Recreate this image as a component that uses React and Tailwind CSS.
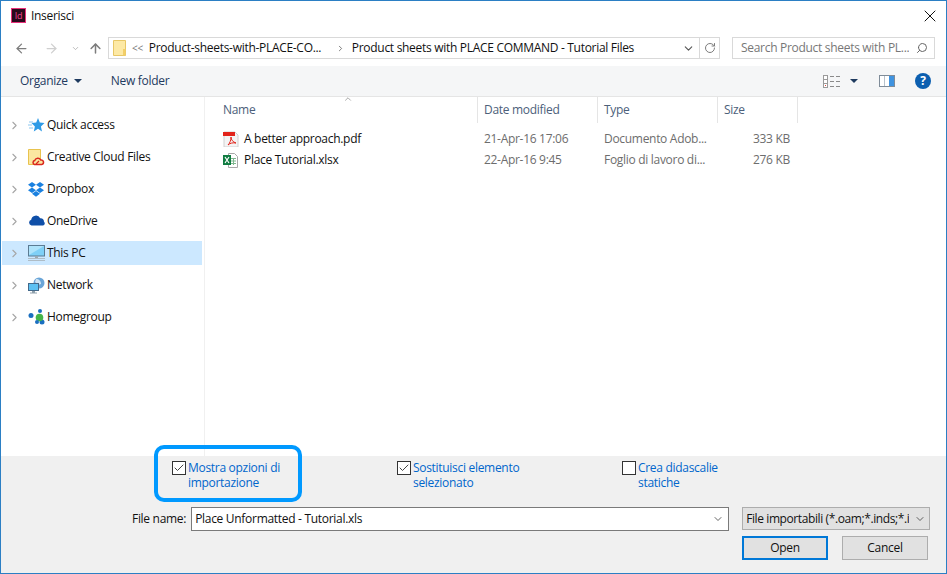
import { ChevronRight, ChevronDown, ArrowLeft, ArrowRight, ArrowUp, RotateCw, Search, X, Check } from "lucide-react"

const font = "font-['Open_Sans','Noto_Sans',sans-serif]"

const StarIcon = () => (
  <svg width="18" height="16" viewBox="0 0 18 16">
    <path d="M11 1l1.800 4.600 4.700.5-3.600 3.300 1.100 5L11 11.700l-4.200 2.700 1.100-5L4.500 6.100l4.700-.5z" fill="#2e9be6" />
    <path d="M2 5h4M1 8h4M2 11h4" stroke="#8cc7ef" strokeWidth="1" />
  </svg>
)

const CloudFolderIcon = () => (
  <svg width="18" height="17" viewBox="0 0 18 17">
    <path d="M1.500.5h12v15h-12z" fill="#fbe7a1" stroke="#e8c34e" />
    <path d="M7.500 15.500a2 2 0 0 1 .2-3.900 3.200 3.200 0 0 1 6-.6 2.300 2.300 0 0 1 1 4.500z" fill="#fbe7a1" stroke="#d9281e" strokeWidth="1.500" />
    <path d="M9 15l3-3" stroke="#d9281e" strokeWidth="1.300" />
  </svg>
)

const DropboxIcon = () => (
  <svg width="16" height="15" viewBox="0 0 16 15">
    <path d="M4 0L0 2.700l4 2.800 4-2.800zM12 0L8 2.700l4 2.800 4-2.800zM0 8.200l4 2.800 4-2.800-4-2.700zM12 5.500L8 8.200l4 2.800 4-2.800zM4 11.800L8 14.700l4-2.900-4-2.700z" fill="#1a81e0" />
  </svg>
)

const OneDriveIcon = () => (
  <svg width="17" height="14" viewBox="0 0 17 14">
    <path d="M3.500 11.500a3 3 0 0 1-.3-5.800 4.800 4.800 0 0 1 9-1.500 3.600 3.600 0 0 1 3.800 3.500 2.200 2.200 0 0 1-1 3.800z" fill="#0f4fa8" />
  </svg>
)

const MonitorIcon = () => (
  <svg width="17" height="16" viewBox="0 0 17 16">
    <rect x="0.500" y="0.500" width="16" height="10.500" fill="#7fd0f7" stroke="#5b7b93" />
    <path d="M1 1h15L1 10z" fill="#aee3fb" />
    <path d="M7 11h3v2H7z" fill="#9aa8b2" />
    <path d="M0 13h17v1H0zM0 15h17v1H0z" fill="#aebcc6" />
  </svg>
)

const NetworkIcon = () => (
  <svg width="17" height="17" viewBox="0 0 17 17">
    <circle cx="11" cy="6" r="5.500" fill="#6aa5d8" />
    <path d="M8 2c3 0 5 2 5 5l-3 1-3-3z" fill="#cfe3f3" />
    <rect x="0.500" y="6.500" width="10" height="7" fill="#5cc0f2" stroke="#43698a" />
    <path d="M4 14h3v1.500H4zM2 15.500h7v1H2z" fill="#8fa0ac" />
  </svg>
)

const HomegroupIcon = () => (
  <svg width="17" height="16" viewBox="0 0 17 16">
    <circle cx="3" cy="6.500" r="2.500" fill="#1a6fc0" />
    <circle cx="12" cy="2" r="2" fill="#1a6fc0" />
    <circle cx="14" cy="13" r="2.500" fill="#1a6fc0" />
    <circle cx="11.500" cy="8.500" r="3.800" fill="#45b549" />
    <circle cx="9" cy="13" r="2" fill="#1a6fc0" />
  </svg>
)

const FolderIcon = () => (
  <svg width="13" height="16" viewBox="0 0 13 16">
    <path d="M.500.500h12v15H.500z" fill="#fde9a5" stroke="#e8c766" />
    <path d="M10 9h2.500v6.500H10z" fill="#f3cf68" />
  </svg>
)

const PdfIcon = () => (
  <svg width="16" height="16" viewBox="0 0 16 16">
    <path d="M1 1h11l3 3v12H1z" fill="#f4f4f4" stroke="#d0d0d0" />
    <path d="M0 1h12v4H0z" fill="#e2231a" />
    <path d="M5 14c2-2 3-5 3-8 0 3 2 5 5 6-3-.5-6 0-8 2z" fill="none" stroke="#e2231a" strokeWidth="1" />
  </svg>
)

const XlsxIcon = () => (
  <svg width="16" height="16" viewBox="0 0 16 16">
    <path d="M5.500 1.500h6l3 3v11h-9z" fill="#fff" stroke="#a8a8a8" />
    <path d="M8 6h5v1H8zM8 8.500h5v1H8zM8 11h5v1H8zM10 6h1v7h-1z" fill="#7fb78f" />
    <rect x="0" y="3" width="8" height="10" fill="#107c41" />
    <path d="M2 5l4 6M6 5l-4 6" stroke="#fff" strokeWidth="1.200" />
  </svg>
)

const ViewsIcon = () => (
  <svg width="17" height="13" viewBox="0 0 17 13">
    <rect x="0.500" y="0.500" width="4" height="12" fill="#fff" stroke="#9a9a9a" />
    <path d="M1 4.500h3M1 8.500h3" stroke="#9a9a9a" />
    <rect x="2" y="10" width="1" height="1" fill="#e04a3a" />
    <path d="M7 1.500h4M13 1.500h4M7 6.500h4M13 6.500h4M7 11.500h4M13 11.500h4" stroke="#8a8a8a" />
  </svg>
)

const PaneIcon = () => (
  <svg width="16" height="12" viewBox="0 0 16 12">
    <rect x="0.500" y="0.500" width="15" height="11" fill="#fff" stroke="#7f8c99" />
    <rect x="10" y="1" width="5" height="10" fill="#3f93e0" />
    <path d="M5.500 1v10" stroke="#b8c2cc" />
  </svg>
)

const sidebarItems = [
  { label: "Quick access", icon: <StarIcon /> },
  { label: "Creative Cloud Files", icon: <CloudFolderIcon /> },
  { label: "Dropbox", icon: <DropboxIcon /> },
  { label: "OneDrive", icon: <OneDriveIcon /> },
  { label: "This PC", icon: <MonitorIcon />, selected: true },
  { label: "Network", icon: <NetworkIcon /> },
  { label: "Homegroup", icon: <HomegroupIcon /> },
]

const files = [
  { name: "A better approach.pdf", date: "21-Apr-16 17:06", type: "Documento Adob...", size: "333 KB", icon: <PdfIcon /> },
  { name: "Place Tutorial.xlsx", date: "22-Apr-16 9:45", type: "Foglio di lavoro di...", size: "276 KB", icon: <XlsxIcon /> },
]

const options = [
  { label: "Mostra opzioni di importazione", checked: true },
  { label: "Sostituisci elemento selezionato", checked: true },
  { label: "Crea didascalie statiche", checked: false },
]

const App = () => {
  return (
    <div className={`relative w-[947px] h-[574px] overflow-hidden bg-white border border-[#2b7fc4] text-[12px] tracking-[-0.3px] text-[#111] flex flex-col ${font}`}>
      <div className="h-[29px] shrink-0 flex items-center pl-[10px] pr-[6px]">
        <div className="w-[15px] h-[15px] bg-[#2a0a1c] border border-[#e8307a] flex items-center justify-center text-[9px] leading-none text-[#f0458f]">Id</div>
        <span className="ml-[5px] text-[#111]">Inserisci</span>
        <X size={20} strokeWidth={1.2} className="ml-auto text-[#111]" />
      </div>

      <div className="h-[36px] shrink-0 flex items-start pt-[7px] pl-[13px]">
        <div className="flex items-center h-[22px] text-[#8a8a8a]">
          <ArrowLeft size={15} strokeWidth={2} className="text-[#7d7d7d]" />
          <ArrowRight size={15} strokeWidth={2} className="ml-[15px] text-[#cfcfcf]" />
          <ChevronDown size={9} strokeWidth={2} className="ml-[12px] text-[#a8a8a8]" />
          <ArrowUp size={15} strokeWidth={2.4} className="ml-[8px] text-[#7d7d7d]" />
        </div>
        <div className="ml-[5px] w-[612px] h-[22px] flex items-center border border-[#d9d9d9] bg-white">
          <div className="ml-[4px] flex"><FolderIcon /></div>
          <span className="ml-[6px] text-[10px] text-[#777]">&lt;&lt;</span>
          <span className="ml-[6px] w-[181px] whitespace-nowrap overflow-hidden">Product-sheets-with-PLACE-CO...</span>
          <ChevronRight size={9} strokeWidth={2} className="ml-[6px] text-[#555]" />
          <span className="ml-[7px] whitespace-nowrap">Product sheets with PLACE COMMAND - Tutorial Files</span>
          <ChevronDown size={13} strokeWidth={2} className="ml-auto mr-[4px] text-[#555]" />
          <div className="h-full border-l border-[#d9d9d9] w-[20px] flex items-center justify-center">
            <RotateCw size={12} strokeWidth={2} className="text-[#7d7d7d]" />
          </div>
        </div>
        <div className="ml-[12px] w-[203px] h-[22px] flex items-center border border-[#d9d9d9] pl-[8px] pr-[6px] text-[#777]">
          <span className="whitespace-nowrap overflow-hidden">Search Product sheets with PL...</span>
          <Search size={12} strokeWidth={2} className="ml-auto shrink-0 -scale-x-100 text-[#666]" />
        </div>
      </div>

      <div className="h-[31px] shrink-0 flex items-center bg-[#f5f6f7] border-b border-[#e5e5e5] pl-[19px] pr-[15px] text-[#1e3a5f]">
        <span>Organize</span>
        <span className="ml-[6px] w-0 h-0 border-x-[4px] border-x-transparent border-t-[4px] border-t-[#1e3a5f]"></span>
        <span className="ml-[29px]">New folder</span>
        <div className="ml-auto flex items-center">
          <ViewsIcon />
          <span className="ml-[10px] w-0 h-0 border-x-[4px] border-x-transparent border-t-[4px] border-t-[#1e3a5f]"></span>
          <div className="ml-[21px] flex"><PaneIcon /></div>
          <div className="ml-[20px] w-[16px] h-[16px] rounded-full bg-[#0c5fb0] text-white font-bold text-[12px] flex items-center justify-center">?</div>
        </div>
      </div>

      <div className="flex-1 flex min-h-0">
        <div className="w-[204px] shrink-0 border-r border-[#f0f0f0] pt-[16px] flex flex-col gap-[8px] pl-[1px] pr-[2px]">
          {sidebarItems.map((item) => (
            <div key={item.label} className={`h-[24px] flex items-center ${item.selected ? "bg-[#cce8ff]" : ""}`}>
              <ChevronRight size={13} strokeWidth={2} className="ml-[6px] text-[#a6a6a6]" />
              <div className="w-[18px] ml-[6px] flex justify-center">{item.icon}</div>
              <span className="ml-[2px]">{item.label}</span>
            </div>
          ))}
        </div>

        <div className="flex-1 flex flex-col relative">
          <ChevronDown size={10} strokeWidth={1.5} className="absolute left-[138px] top-[-3px] rotate-180 text-[#777]" />
          <div className="h-[26px] flex items-center text-[#4c607a]">
            <div className="w-[273px] h-full pl-[18px] flex items-center border-r border-[#e5e5e5]">Name</div>
            <div className="w-[120px] h-full pl-[6px] flex items-center border-r border-[#e5e5e5]">Date modified</div>
            <div className="w-[120px] h-full pl-[6px] flex items-center border-r border-[#e5e5e5]">Type</div>
            <div className="w-[80px] h-full pl-[6px] flex items-center border-r border-[#e5e5e5]">Size</div>
          </div>
          <div className="pt-[5px] flex flex-col">
            {files.map((file) => (
              <div key={file.name} className="h-[21px] flex items-center">
                <div className="w-[272px] pl-[18px] flex items-center">
                  {file.icon}
                  <span className="ml-[5px]">{file.name}</span>
                </div>
                <div className="w-[120px] pl-[7px] text-[#6d6d6d]">{file.date}</div>
                <div className="w-[120px] pl-[7px] text-[#6d6d6d]">{file.type}</div>
                <div className="w-[73px] text-right text-[#6d6d6d]">{file.size}</div>
              </div>
            ))}
          </div>
        </div>
      </div>

      <div className="h-[117px] shrink-0 bg-[#f0f0f0]">
        <div className="flex pl-[171px] pt-[4px]">
          {options.map((opt) => (
            <div key={opt.label} className="w-[225px] flex items-start text-[#0066cc]">
              <div className="mt-[1px] w-[14px] h-[14px] border border-[#333] bg-white flex items-center justify-center">
                {opt.checked && <Check size={12} strokeWidth={2} className="text-[#444]" />}
              </div>
              <div className="ml-[2px] w-[112px] leading-[15px]">{opt.label}</div>
            </div>
          ))}
        </div>
        <div className="flex items-start mt-[17px]">
          <span className="ml-[131px] mt-[4px] leading-[16px]">File name:</span>
          <div className="ml-[5px] w-[538px] h-[24px] bg-white border border-[#7a7a7a] flex items-center pl-[3px] pr-[4px]">
            <span>Place Unformatted - Tutorial.xls</span>
            <ChevronDown size={12} strokeWidth={1.5} className="ml-auto text-[#333]" />
          </div>
          <div className="ml-[13px] w-[188px] h-[23px] bg-[#e1e1e1] border border-[#adadad] flex items-center pl-[3px] pr-[3px]">
            <span className="whitespace-nowrap overflow-hidden tracking-[-0.4px]">File importabili (*.oam;*.inds;*.i</span>
            <ChevronDown size={12} strokeWidth={1.5} className="ml-auto shrink-0 text-[#333]" />
          </div>
        </div>
        <div className="flex justify-end mt-[5px] pr-[18px] gap-[14px]">
          <div className="w-[86px] h-[24px] bg-[#e1e1e1] border-2 border-[#0078d7] flex items-center justify-center">Open</div>
          <div className="w-[86px] h-[24px] bg-[#e1e1e1] border border-[#adadad] flex items-center justify-center">Cancel</div>
        </div>
      </div>

      <div className="absolute left-[153px] top-[444px] w-[148px] h-[57px] rounded-[10px] border-[4px] border-[#0099ff]"></div>
    </div>
  )
}

export default App
